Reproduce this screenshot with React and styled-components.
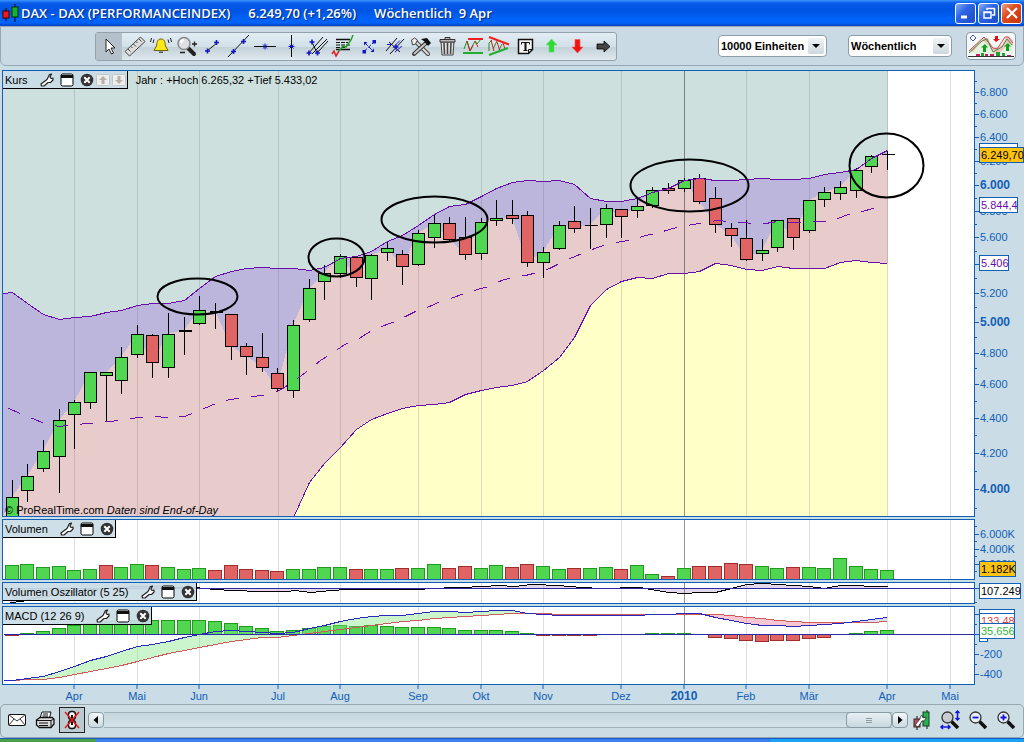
import React from "react";
import styled, { createGlobalStyle } from "styled-components";

const BLUE = "#1060b8";
const PURPLE = "#6a0dad";

// kind, high, body top, body bottom, low, volume top, macd histogram end
const weeks = [
  ["g", 479, 497, 520, 520, 565, 635],
  ["g", 463, 476, 490, 500, 564, 633],
  ["g", 439, 451, 468, 470, 567, 631],
  ["g", 408, 420, 456, 491, 566, 628],
  ["g", 399, 402, 414, 447, 570, 625],
  ["g", 371, 372, 402, 407, 569, 623],
  ["g", 372, 372, 375, 420, 565, 621, "r"],
  ["g", 346, 357, 380, 392, 567, 620],
  ["g", 324, 334, 354, 356, 564, 620],
  ["r", 333, 335, 362, 376, 565, 620],
  ["g", 312, 334, 367, 376, 567, 620],
  ["d", 316, 330, 331, 353, 569, 620, "g"],
  ["g", 295, 310, 323, 323, 568, 620],
  ["d", 302, 311, 312, 327, 570, 621, "r"],
  ["r", 314, 314, 346, 358, 565, 623],
  ["r", 342, 346, 356, 373, 569, 626],
  ["r", 332, 357, 367, 370, 570, 628],
  ["r", 367, 373, 388, 390, 571, 631],
  ["g", 319, 325, 390, 396, 569, 630],
  ["g", 278, 288, 319, 320, 569, 628],
  ["g", 264, 273, 281, 298, 567, 626],
  ["g", 253, 256, 273, 276, 567, 625],
  ["r", 256, 257, 277, 285, 569, 626],
  ["g", 253, 255, 278, 298, 569, 625],
  ["g", 241, 248, 252, 259, 569, 626],
  ["r", 249, 254, 266, 283, 568, 627],
  ["g", 229, 233, 264, 264, 568, 627],
  ["g", 213, 223, 237, 246, 564, 627],
  ["r", 216, 223, 239, 240, 568, 628],
  ["r", 216, 237, 254, 258, 566, 630],
  ["g", 217, 222, 253, 258, 568, 630],
  ["g", 199, 218, 220, 224, 565, 630],
  ["r", 199, 215, 218, 222, 567, 631],
  ["r", 210, 215, 262, 265, 564, 633],
  ["g", 246, 252, 262, 276, 566, 635],
  ["g", 220, 225, 248, 248, 569, 635],
  ["r", 205, 221, 228, 231, 568, 635],
  ["t", 207, 225, 225, 247, 568, 635, "g"],
  ["g", 203, 208, 224, 236, 567, 634],
  ["r", 208, 209, 216, 236, 569, 634],
  ["g", 198, 206, 210, 216, 565, 634],
  ["g", 186, 190, 205, 206, 574, 633],
  ["r", 182, 188, 190, 192, 576, 633],
  ["g", 177, 180, 188, 190, 568, 633],
  ["r", 173, 178, 201, 202, 566, 634],
  ["r", 186, 198, 224, 231, 566, 637],
  ["r", 222, 228, 235, 245, 563, 638],
  ["r", 219, 238, 259, 259, 564, 640],
  ["g", 238, 250, 253, 259, 566, 641, "g", "r"],
  ["g", 219, 220, 247, 250, 568, 640],
  ["r", 218, 218, 237, 248, 567, 640],
  ["g", 200, 200, 230, 231, 567, 638],
  ["g", 186, 192, 199, 205, 568, 637],
  ["g", 180, 187, 193, 198, 558, 634],
  ["g", 167, 170, 190, 196, 566, 633],
  ["g", 154, 156, 166, 171, 569, 631],
  ["t", 150, 154, 154, 168, 570, 630, "g"],
].map(([kind, high, top, bottom, low, volume, hist, tone], i) => ({
  x: Math.round(11.8 + i * 15.625),
  kind, high, top, bottom, low, volume, hist,
  tone: tone || kind,
  close: kind === "r" ? bottom : top,
}));

const upper = [
  292, 303, 314, 319, 317, 316, 312, 310, 305, 303, 303, 300, 288, 276, 271, 268, 267, 268, 268,
  270, 267, 258, 256, 251, 241, 235, 225, 214, 206, 204, 196, 188, 182, 180, 181, 180, 184, 198,
  201, 201, 198, 192, 188, 180, 178, 180, 180, 179, 178, 179, 179, 178, 174, 172, 169, 158, 150,
].map((y, i) => [weeks[i].x, y]);

const lower = [
  482, 463, 447, 429, 419, 413, 408, 405, 404, 402, 394, 390, 387, 385, 381, 370, 357, 337, 305,
  289, 281, 277, 278, 273, 273, 271, 263, 265, 269, 270, 266, 268, 268, 268, 262, 260, 262, 263,
].map((y, i) => [weeks[i + 19].x, y]);

const middle = "8,408 20,413 32,418 44,423 59,426 74,424 90,423 106,421 121,420 137,417 152,416 168,417 184,416 199,410 213,404 225,400 237,398 248,397 260,395 273,393 284,387 297,378 309,369 320,360 333,352 344,344 357,339 368,332 381,326 392,322 405,316 417,310 429,306 440,301 453,297 464,293 477,289 488,286 501,280 512,277 525,275 537,272 549,268 561,262 572,257 584,252 597,247 608,243 622,241 632,239 645,235 656,233 669,229 680,226 693,224 704,222 717,220 728,221 741,222 753,223 765,223 777,221 789,222 801,222 813,221 824,221 837,218 848,214 862,211 872,208 885,206";

const oscillator = "10,602 22,601 32,598 60,594 90,589 137,586 195,587 203,588 230,590 262,591 287,591 294,590 311,592 330,590 348,589 420,589 430,588 458,587 485,586 497,585 515,586 530,584 560,585 567,586 600,588 640,587 650,589 668,592 684,593 700,592 715,592 731,588 746,584 762,583 778,584 809,586 824,588 840,585 856,585 871,586 887,586";

const macd = [
  680, 678, 676, 671, 666, 660, 656, 651, 646, 644, 641, 637, 634, 631, 630, 631, 632, 633, 632,
  628, 625, 621, 618, 616, 615, 615, 613, 611, 611, 612, 611, 610, 610, 613, 614, 615, 615, 615,
  615, 615, 615, 614, 614, 613, 613, 617, 620, 623, 625, 625, 626, 625, 624, 623, 621, 619, 617,
].map((y, i) => [weeks[i].x, y]);

const signal = [
  680, 679, 679, 677, 674, 671, 668, 665, 661, 657, 653, 650, 647, 644, 641, 639, 637, 637, 635,
  633, 631, 629, 627, 625, 623, 621, 620, 618, 617, 616, 615, 614, 613, 613, 613, 614, 614, 614,
  614, 614, 614, 614, 614, 614, 614, 614, 615, 617, 618, 620, 621, 622, 622, 622, 622, 622, 621,
].map((y, i) => [weeks[i].x, y]);

const months = [
  ["Apr", 74], ["Mai", 137], ["Jun", 199], ["Jul", 278], ["Aug", 340], ["Sep", 418], ["Okt", 481],
  ["Nov", 543], ["Dez", 621], ["2010", 684], ["Feb", 746], ["Mär", 809], ["Apr", 887], ["Mai", 950],
];

const circles = [
  [197, 296, 40, 18], [336, 257, 28, 19], [434, 219, 53, 23], [689, 185, 59, 26], [886, 165, 37, 32],
];

const fills = { g: "#50d650", r: "#e06464" };
const edges = { g: "#1f9a1f", r: "#a02c2c" };
const pts = (list) => list.map((p) => p.join(",")).join(" ");

function Grid({ top, height }) {
  return months.map(([name, x], i) => (
    <rect key={i} x={x} y={top} width="1" height={height} fill={name === "2010" ? "#000" : "#404050"} fillOpacity={name === "2010" ? 0.42 : 0.17} />
  ));
}

function Plot({ top, height, label, children }) {
  return (
    <PlotSvg role="img" aria-label={label} viewBox={`3 ${top} 971 ${height}`} preserveAspectRatio="none" $height={height}>
      {children}
    </PlotSvg>
  );
}

function PricePlot() {
  const close = weeks.map((w) => [w.x, w.close]);
  const up = [[3, 293], ...upper];
  const low = [[293, 517], ...lower];
  return (
    <Plot top={71} height={445} label="DAX Kursverlauf">
      <polygon fill="#cde0de" points={pts([[3, 71], [888, 71], [888, 516], [3, 516]])} />
      <polygon fill="#bdb6dc" points={pts([...up, [888, 150], [888, 516], [3, 516]])} />
      <polygon fill="#e8cccc" points={pts([[3, 516], ...close, [888, 154], [888, 516]])} />
      <polygon fill="#ffffc8" points={pts([...low, [888, 263], [888, 516]])} />
      <Grid top={71} height={445} />
      <g transform="translate(.5 .5)">
        {weeks.map((w) => (
          <g key={w.x} stroke="#000">
            <line x1={w.x} x2={w.x} y1={w.high} y2={w.low + 1} />
            {fills[w.kind] ? (
              <rect x={w.x - 6} y={w.top} width="12" height={w.bottom - w.top} fill={fills[w.kind]} />
            ) : (
              <path d={`M${w.x - 6} ${w.top}h13${w.kind === "d" ? "m0 1h-13" : ""}`} />
            )}
          </g>
        ))}
        <g fill="none" stroke={PURPLE}>
          <polyline points={pts(up)} />
          <polyline points={pts(low)} />
          <polyline points={middle} strokeDasharray="13 12" />
        </g>
        <g fill="none" stroke="#000" strokeWidth="2" shapeRendering="auto">
          {circles.map(([cx, cy, rx, ry]) => (
            <ellipse key={cx} cx={cx} cy={cy} rx={rx} ry={ry} />
          ))}
        </g>
      </g>
    </Plot>
  );
}

function VolumePlot() {
  return (
    <Plot top={520} height={59} label="Volumen">
      <Grid top={520} height={59} />
      {weeks.map((w) => (
        <rect key={w.x} x={w.x - 6.5} y={w.volume + 0.5} width="13" height={580 - w.volume} fill={fills[w.tone]} stroke={edges[w.tone]} />
      ))}
    </Plot>
  );
}

function OscillatorPlot() {
  return (
    <Plot top={583} height={20} label="Volumen Oszillator">
      <Grid top={583} height={20} />
      <polygon points={`12,588 ${oscillator} 887,588`} fill="#8c64a8" fillOpacity=".25" />
      <g transform="translate(.5 .5)" fill="none">
        <polyline points={oscillator} stroke="#000" />
        <line x1="3" x2="974" y1="588" y2="588" stroke="#2a2aa8" />
      </g>
    </Plot>
  );
}

function MacdPlot() {
  const area = (from, to) => pts([...macd.slice(from, to), ...signal.slice(from, to).reverse()]);
  return (
    <Plot top={607} height={77} label="MACD">
      <Grid top={607} height={77} />
      {weeks.map((w) => {
        if (w.hist === 634) return null;
        const tone = w.hist > 634 ? "r" : "g";
        return (
          <rect key={w.x} x={w.x - 6.5} y={Math.min(w.hist, 634) + 0.5} width="13" height={Math.abs(634 - w.hist)} fill={fills[tone]} stroke={edges[tone]} />
        );
      })}
      <polygon points={area(0, 34)} fill="#7ee67e" fillOpacity=".4" />
      <polygon points={area(44, 54)} fill="#f08098" fillOpacity=".45" />
      <polygon points={area(53, 57)} fill="#8090c0" fillOpacity=".3" />
      <g transform="translate(.5 .5)" fill="none">
        <polyline points={pts([[3, 680], ...signal])} stroke="#d05a5a" />
        <polyline points={pts([[3, 680], ...macd])} stroke="#2828c0" />
        <line x1="3" x2="974" y1="634" y2="634" stroke="#2a2aa8" />
      </g>
    </Plot>
  );
}

function Scale({ top, height, major = [], minor = [], labels = [], children }) {
  return (
    <ScaleSvg viewBox={`975 ${top} 49 ${height}`} $height={height}>
      {major.map((y) => <rect key={y} x="975" y={y} width="4" height="1" />)}
      {minor.map((y) => <rect key={y} x="975" y={y} width="2" height="1" />)}
      {labels.map(([text, y, bold]) => (
        <ScaleText key={text} x="980" y={y + 4} $bold={bold}>{text}</ScaleText>
      ))}
      {children}
    </ScaleSvg>
  );
}

function Tag({ y, width, text, fill = "#fff", color = "#000" }) {
  return (
    <g>
      <rect x="979.5" y={y + 0.5} width={width} height="15" fill={fill} stroke={BLUE} />
      <ScaleText x="981" y={y + 12} fill={color}>{text}</ScaleText>
    </g>
  );
}

const WrenchIcon = () => (
  <Icon viewBox="0 0 14 14">
    <path d="M8 4.500L9.500 1.500 11.500 1 10 4l1 1.500L13 5v2l-2.500 2.500H8L4 13H1.500l-.5-2 6-4.500z" fill="#fff" stroke="#222" strokeWidth="1.200" strokeLinejoin="round" />
  </Icon>
);

const WindowIcon = () => (
  <Icon viewBox="0 0 14 14">
    <rect x="1" y="1" width="12" height="12" rx="1.5" fill="#fff" stroke="#000" />
    <path d="M1 2h12v3H1z" fill="#111" />
  </Icon>
);

const CloseIcon = () => (
  <Icon viewBox="0 0 14 14">
    <circle cx="7" cy="7" r="6.3" fill="#333" />
    <path d="M4.3 4.3l5.4 5.4M9.700 4.300l-5.400 5.400" stroke="#fff" strokeWidth="2" />
  </Icon>
);

const MoveIcon = ({ down }) => (
  <Icon viewBox="0 0 14 14">
    <rect x=".5" y="1.500" width="13" height="11" rx="1" fill="#eee" stroke="#c4c4c0" />
    <path d={down ? "M7 11L3 7h2.500V3h3v4H11z" : "M7 3L3 7h2.500v4h3V7H11z"} fill="#b4b0ac" />
  </Icon>
);

function PanelHead({ title, movable }) {
  return (
    <Head>
      <HeadTitle>{title}</HeadTitle>
      <HeadButton aria-label={`${title} einstellen`}><WrenchIcon /></HeadButton>
      <HeadButton aria-label={`${title} maximieren`}><WindowIcon /></HeadButton>
      <HeadButton aria-label={`${title} entfernen`}><CloseIcon /></HeadButton>
      {movable && (
        <MoveButtons>
          <HeadButton aria-label="Nach oben"><MoveIcon /></HeadButton>
          <HeadButton aria-label="Nach unten"><MoveIcon down /></HeadButton>
        </MoveButtons>
      )}
    </Head>
  );
}

// small blue anchor cross used by the line tools
const Cross = ({ x, y }) => <path d={`M${x - 2.500} ${y}h5M${x} ${y - 2.500}v5`} stroke="#1414c8" strokeWidth="1.600" />;

const tools = [
  ["Auswahl", <path d="M9 5v13l3-3 2.500 5 2-1-2.500-5h4z" fill="#fff" stroke="#222" />],
  ["Lineal", <g><path d="M2 17.500L17.500 3l4.500 4.500L6.500 22z" fill="#ddd" stroke="#444" /><path d="M5 15l2.500 2.500M8 12.500l1.500 1.500M10.500 10l2.500 2.500M13 7.500l1.500 1.500M16 5l2.500 2.500" stroke="#444" /></g>],
  ["Alarm", <g><path d="M12 5c-4 0-4 4-4.500 7L5 16.500h14L16.500 12c-.5-3-.5-7-4.500-7z" fill="#ffe818" stroke="#706000" /><path d="M10 17.500h4v1.500h-4z" fill="#555" /><path d="M5 5.500L4 9M2.500 4L1.500 8M19 5.500l1 3.500M21.500 4l1 4" fill="none" stroke="#222" /></g>],
  ["Zoom", <g><path d="M13 14l6 6" stroke="#222" strokeWidth="4" strokeLinecap="round" /><circle cx="9" cy="9.500" r="6" fill="#dce0e4" stroke="#888" strokeWidth="1.500" /><path d="M6 9a3 3 0 0 1 3-3" stroke="#fff" strokeWidth="2" fill="none" /><path d="M17 10h5M19.500 7.500v5M5 18.500h5" stroke="#222" strokeWidth="1.300" /></g>],
  ["Strecke", <g><path d="M6 17l10-8" stroke="#111" /><Cross x={6.5} y={17} /><Cross x={15.500} y={8.500} /></g>],
  ["Gerade", <g><path d="M1 23L22 1" stroke="#111" /><Cross x={6.500} y={17.500} /><Cross x={16.500} y={7.500} /></g>],
  ["Horizontale", <g><path d="M1 12.500h22" stroke="#111" /><path d="M10 10.500l4 4M14 10.500l-4 4M12 9.500v6" stroke="#1414c8" /></g>],
  ["Vertikale", <g><path d="M12.500 1v22" stroke="#111" /><path d="M10.500 10.500l4 4M14.500 10.500l-4 4M9.500 12.500h6" stroke="#1414c8" /></g>],
  ["Pitchfork", <g><path d="M3 20L18 3M7 20L22 5M12 19L23 7M7 8l5 11" stroke="#111" /><Cross x={4} y={19} /><Cross x={7} y={8} /><Cross x={12.500} y={19} /></g>],
  ["Fibonacci", <g><path d="M5 5.500h14M5 15.500h14" stroke="#111" strokeWidth="1.500" /><path d="M5 8.500h12M5 11h14M5 13.500h10" stroke="#111" strokeDasharray="4 1" /><path d="M1 20l2-3 2 5 3-5" fill="none" stroke="#e02020" strokeWidth="1.500" /><path d="M8 17l4-5 3 1 5-7 2-5" fill="none" stroke="#20a020" strokeWidth="1.500" /></g>],
  ["Segment", <g fill="#1414c8"><path d="M7 17.500L17 8M8 9l8 8" stroke="#1414c8" strokeDasharray="4 1.500" /><path d="M5.500 16h3.500v3.500H5.500zM15.500 6H19v3.500h-3.500zM7 8h3.500L7 11.500zM17 18h-3.500l3.500-3.500z" /></g>],
  ["Parallelen", <g><path d="M3 17L14 4M7 20L21 5M6 8l11 10" stroke="#111" /><path d="M4 10.500h4M10 13.500l7-7M12 18l7-6" stroke="#1414c8" /><Cross x={13} y={13} /></g>],
  ["Werkzeuge", <g><path d="M6 7l13 13" stroke="#444" strokeWidth="4" strokeLinecap="round" /><path d="M6 7l13 13" stroke="#ddd" strokeWidth="2" strokeLinecap="round" /><path d="M18 8L5 20" stroke="#333" strokeWidth="4" strokeLinecap="round" /><path d="M16 10L5.500 19.500" stroke="#c8c8c8" strokeWidth="2" strokeLinecap="round" /><path d="M12 5l6-1 4 5-3 3-3-4z" fill="#111" /><path d="M2.500 6l3-2 3 2-2 4-3 1z" fill="#eee" stroke="#444" /></g>],
  ["Papierkorb", <g><path d="M6 8h13l-1 13H7z" fill="#ddd" stroke="#444" /><path d="M9 9l.5 11M12.500 9v11M16 9l-.5 11" stroke="#444" strokeWidth="1.500" /><path d="M5 5.500h15v2.500H5zM10 5V3.500h5V5" fill="#bbb" stroke="#333" /></g>],
  ["Unterstützung", <g fill="none"><path d="M3 15l3-8 3 10 5-10 2 3 4-5" stroke="#209020" /><path d="M6 7l3 10 3-6M14 7l3 6" stroke="#d02020" /><path d="M7 5h15" stroke="#f02020" strokeWidth="2" /><path d="M2 19h20" stroke="#20b030" strokeWidth="2" /></g>],
  ["Dreieck", <g fill="none"><path d="M2 17V9l3-3M6 15l4-8M12 16l3-6" stroke="#209020" /><path d="M4 6l3 11M10 8l3 9M16 9l2 6" stroke="#d02020" /><path d="M2 3l20 7.500" stroke="#f02020" strokeWidth="2" /><path d="M2 21l19-7" stroke="#20b030" strokeWidth="2" /></g>],
  ["Textfeld", <g><path d="M5.500 5.500h14v10l-4 4h-10z" fill="#f4f4f4" stroke="#111" strokeWidth="1.500" /><path d="M15.500 19.500v-4h4" fill="none" stroke="#111" /><path d="M8.500 10.500V8.500h8v2M10.500 16.500h4" fill="none" stroke="#111" /><path d="M12.500 8.500v8" stroke="#111" strokeWidth="2" /></g>],
  ["Pfeil hoch", <path d="M12.500 5L18 11h-3v7h-5v-7H7z" fill="#30d838" stroke="#60e060" strokeWidth=".6" />],
  ["Pfeil runter", <path d="M12.500 19L7 13h3V5.500h5V13h3z" fill="#ee1414" stroke="#ff5050" strokeWidth=".6" />],
  ["Pfeil rechts", <path d="M19 12.500L13 18v-3H6v-5h7V7z" fill="#444" stroke="#000" strokeWidth=".8" />],
];

function Lens({ sign, children }) {
  return (
    <Icon $size={22} viewBox="0 0 22 22">
      <path d="M12.500 12.500l6.500 6.500" stroke="#111" strokeWidth="3.500" />
      <circle cx="8.500" cy="8.500" r="5.500" fill={sign ? "#e8eef4" : "#c8ccd0"} stroke="#333" strokeWidth="1.300" />
      {sign && <path d={sign} stroke="#1414d8" strokeWidth="1.800" />}
      {children}
    </Icon>
  );
}

export default function App() {
  return (
    <Page>
      <GlobalStyle />
      <TitleBar>
        <Icon $size={18} viewBox="0 0 18 18">
          <path d="M5 4v13M14 0v18" stroke="#000" />
          <rect x="2" y="7" width="6" height="7" fill="#f01818" stroke="#400" />
          <rect x="11" y="3" width="6" height="10" fill="#18b028" stroke="#030" />
        </Icon>
        <Title>
          <span>DAX - DAX (PERFORMANCEINDEX)</span>
          <span>6.249,70 (+1,26%)</span>
          <span>Wöchentlich&nbsp; 9 Apr</span>
        </Title>
        <WindowButton aria-label="Minimieren">
          <Icon viewBox="0 0 14 14"><path d="M2 11h6" stroke="#fff" strokeWidth="3" /></Icon>
        </WindowButton>
        <WindowButton aria-label="Wiederherstellen">
          <Icon viewBox="0 0 14 14"><path d="M5 4V2.500h7.500V9H10M5 2.500h7.500M2 6h7v6H2zM2 6.500h7" fill="none" stroke="#fff" strokeWidth="1.500" /></Icon>
        </WindowButton>
        <WindowButton $close aria-label="Schließen">
          <Icon viewBox="0 0 14 14"><path d="M2 2l10 10M12 2L2 12" stroke="#fff" strokeWidth="2.200" /></Icon>
        </WindowButton>
      </TitleBar>

      <ToolBar>
        <ToolGroup>
          {tools.map(([name, drawing], i) => (
            <ToolButton key={name} aria-label={name} $active={i === 0}>
              <Icon $size={24} viewBox="0 0 24 24">{drawing}</Icon>
            </ToolButton>
          ))}
        </ToolGroup>
        <Selects>
          <SelectBox $width={109}>
            <select aria-label="Einheiten" defaultValue="10000 Einheiten">
              <option>10000 Einheiten</option>
            </select>
            <Arrow />
          </SelectBox>
          <SelectBox $width={104}>
            <select aria-label="Zeitraum" defaultValue="Wöchentlich">
              <option>Wöchentlich</option>
            </select>
            <Arrow />
          </SelectBox>
        </Selects>
        <ChartButton aria-label="Indikatoren">
          <svg width="46" height="24" viewBox="0 0 46 24">
            <path d="M1 18L14 6l6-2 6 14 8-3 7-10 4 4v11l-6-3-7 3H8z" fill="#e4f2e0" />
            <path d="M1 16L15 4h5l5 10 9-3 4-8 3-1 4 5v5l-5-3-6 8-7 3-8-10-5-4L5 18z" fill="#f4b8b8" fillOpacity=".8" />
            <path d="M1 17L16 3l9 11 4 1 8-12h3l5 6" fill="none" stroke="#c05050" />
            <path d="M1 19L14 7l5-2 6 13 9-5 5-8 5 6" fill="none" stroke="#409040" />
            <path d="M5 1l1.500 1.500L8 4 5 7 2 4z" fill="#fff" stroke="#4050b0" />
            <path d="M17 10l3 3.500h-2V18h-3v-4.500h-2zM40 9l3 3.500h-2V17h-3v-4.500h-2z" fill="#10a020" />
            <path d="M28 8l-3-3h2V2h3v3h2z" fill="#e01010" />
            <path d="M0 22.500h46" stroke="#333" />
            <path d="M8 22v-2h4v2M17 22v-2h3v2M22 22v-2h4v2M39 22v-1h4v1" fill="#c02060" />
            <path d="M13 22v-3h3v3M28 22v-4h4v4M34 22v-3h3v3" fill="#20a030" />
          </svg>
        </ChartButton>
      </ToolBar>

      <Charts>
        <Panel>
          <PlotBox>
            <PricePlot />
            <Overlay>
              <PanelHead title="Kurs" movable />
              <HighLow>Jahr : +Hoch 6.265,32 +Tief 5.433,02</HighLow>
            </Overlay>
            <Credit>© ProRealTime.com <em>Daten sind End-of-Day</em></Credit>
          </PlotBox>
          <Scale
            top={70}
            height={447}
            major={[92, 114, 137, 161, 185, 211, 237, 264, 293, 322, 353, 384, 418, 453, 489]}
            minor={[81, 103, 126, 149, 173, 198, 224, 251, 278, 307, 337, 368, 401, 435, 471, 508]}
            labels={[
              ["6.800", 92], ["6.600", 114], ["6.400", 137], ["6.200", 161], ["6.000", 185, true],
              ["5.800", 211], ["5.600", 237], ["5.200", 293], ["5.000", 322, true], ["4.800", 353],
              ["4.600", 384], ["4.400", 418], ["4.200", 453], ["4.000", 489, true],
            ]}
          >
            <Tag y={143} width={38} />
            <Tag y={147} width={44} text="6.249,70" fill="#ffc20e" />
            <Tag y={197} width={38} text="5.844,4" color="#6a0dad" />
            <Tag y={255} width={29} text="5.406" color="#6a0dad" />
          </Scale>
        </Panel>

        <Panel>
          <PlotBox>
            <VolumePlot />
            <Overlay><PanelHead title="Volumen" /></Overlay>
          </PlotBox>
          <Scale top={519} height={61} major={[534, 549, 564]} minor={[526, 541, 556, 571]} labels={[["6.000K", 534], ["4.000K", 549], ["2.000K", 564]]}>
            <Tag y={561} width={36} text="1.182K" fill="#ffc20e" />
          </Scale>
        </Panel>

        <Panel>
          <PlotBox>
            <OscillatorPlot />
            <Overlay><PanelHead title="Volumen Oszillator (5 25)" /></Overlay>
          </PlotBox>
          <Scale top={582} height={22} major={[588]} minor={[602]}>
            <Tag y={583} width={41} text="107.249" />
          </Scale>
        </Panel>

        <Panel>
          <PlotBox>
            <MacdPlot />
            <Overlay><PanelHead title="MACD (12 26 9)" /></Overlay>
          </PlotBox>
          <Scale top={606} height={79} major={[614, 634, 654, 674]} minor={[624, 644, 664]} labels={[["-200", 654], ["-400", 674]]}>
            <Tag y={609} width={35} />
            <Tag y={626} width={8} />
            <Tag y={613} width={35} text="133,48" color="#d84848" />
            <Tag y={623} width={35} text="35,656" color="#30b840" />
          </Scale>
        </Panel>

        <TimeAxis>
          {months.map(([name, x], i) => {
            const left = `${((x - 2) / 973) * 100}%`;
            return (
              <g key={i}>
                <line x1={left} x2={left} y1="0" y2="4" stroke={BLUE} />
                <TimeText x={left} y="15" $bold={name === "2010"}>{name}</TimeText>
              </g>
            );
          })}
        </TimeAxis>
      </Charts>

      <BottomBar>
        <BarButton aria-label="E-Mail">
          <Icon $size={22} viewBox="0 0 22 22">
            <rect x="2.500" y="5.500" width="17" height="11" rx="1" fill="#fff" stroke="#111" />
            <path d="M3 6l8 6 8-6M3 16l5-6M19 16l-5-6" fill="none" stroke="#333" />
          </Icon>
        </BarButton>
        <BarButton aria-label="Drucken">
          <Icon $size={22} viewBox="0 0 22 22">
            <path d="M6 9l2-6h9l-1.500 6M9 5h5M8.500 7H14" fill="#fff" stroke="#111" />
            <path d="M2.500 11L6 8.500h12l2 1.500v5l-3 3.500H5.500L2.500 16z" fill="#ddd" stroke="#111" strokeWidth="1.300" />
            <path d="M2.500 11.500H17v6M17 11.500l3-1.500M5 14h9M5 16.500h9" fill="none" stroke="#111" />
          </Icon>
        </BarButton>
        <BarButton $framed aria-label="Verknüpfung aus">
          <Icon $size={22} viewBox="0 0 22 22">
            <rect x="7.500" y="2.500" width="7" height="8" rx="3" fill="#fff" stroke="#111" strokeWidth="1.400" />
            <rect x="7.500" y="11.500" width="7" height="8" rx="3" fill="#fff" stroke="#111" strokeWidth="1.400" />
            <path d="M11 6v10" stroke="#111" strokeWidth="2" />
            <path d="M4 3l14 16M18 3L4 19" stroke="#e81818" strokeWidth="1.500" />
          </Icon>
        </BarButton>
        <ScrollBar>
          <ScrollButton aria-label="Zurück"><Icon $size={8} viewBox="0 0 8 8"><path d="M6 0v8L1.500 4z" fill="#000" /></Icon></ScrollButton>
          <Track><Thumb><i /><i /><i /></Thumb></Track>
          <ScrollButton aria-label="Vor"><Icon $size={8} viewBox="0 0 8 8"><path d="M2 0v8l4.500-4z" fill="#000" /></Icon></ScrollButton>
        </ScrollBar>
        <BarIcons>
          <BarButton aria-label="Darstellung">
            <Icon $size={22} viewBox="0 0 22 22">
              <path d="M6 7v14M16 1v19" stroke="#111" />
              <rect x="3" y="10" width="6" height="8" fill="#b05060" stroke="#402020" />
              <rect x="12" y="3" width="6" height="14" fill="#28b050" stroke="#104020" />
              <path d="M11 6l1 3 3-1c0 3-2 4-4 4l-4 6-3-2 5-6c0-2 1-3 2-4z" fill="#fff" stroke="#222" strokeWidth=".8" />
            </Icon>
          </BarButton>
          <BarButton aria-label="Zoom anpassen">
            <Lens><path d="M18.500 2v9M16.500 4l2-2 2 2M16.500 9l2 2 2-2M2 18h9M4 16l-2 2 2 2M9 16l2 2-2 2" fill="none" stroke="#1414d8" strokeWidth="1.500" /></Lens>
          </BarButton>
          <BarButton aria-label="Verkleinern"><Lens sign="M5.500 8.500h6" /></BarButton>
          <BarButton aria-label="Vergrößern"><Lens sign="M5.500 8.500h6M8.500 5.500v6" /></BarButton>
        </BarIcons>
      </BottomBar>
      <TaskStrip><i /><i /><i /></TaskStrip>
    </Page>
  );
}

const GlobalStyle = createGlobalStyle`
  * {
    box-sizing: border-box;
  }
  body {
    margin: 0;
    background: #cadce6;
    font: 11px/14px "Liberation Sans", Arial, sans-serif;
    color: #000;
  }
  button {
    border: 0;
    padding: 0;
    background: none;
    font: inherit;
  }
`;

const Page = styled.div`
  display: flex;
  flex-direction: column;
  min-height: 100vh;
`;

const Icon = styled.svg`
  display: block;
  flex: none;
  width: ${(p) => p.$size || 14}px;
  height: ${(p) => p.$size || 14}px;
`;

const TitleBar = styled.header`
  display: flex;
  align-items: center;
  gap: 2px;
  height: 26px;
  padding: 0 2px 0 1px;
  background: linear-gradient(#3c96ff 0, #0a5cea 3px, #0054e3 10px, #0064fa 20px, #0062f8 23px, #0040c0 26px);
`;

const Title = styled.h1`
  display: flex;
  flex: 1;
  gap: 18px;
  margin: 0;
  color: #fff;
  font: 600 13px/20px "Open Sans", sans-serif;
  text-shadow: 1px 1px 1px #04257a;
  white-space: nowrap;
`;

const WindowButton = styled.button`
  display: grid;
  place-items: center;
  width: 21px;
  height: 21px;
  border: 1px solid #fff;
  border-radius: 3px;
  background: ${(p) =>
    p.$close
      ? "linear-gradient(135deg, #f0a080, #e04c20 40%, #c83408)"
      : "linear-gradient(135deg, #86aef8, #2c64e4 40%, #1c4ccc)"};
`;

const ToolBar = styled.div`
  display: flex;
  align-items: center;
  height: 40px;
  margin-bottom: 4px;
  padding: 0 7px 0 94px;
  border: 1px solid #98a8b8;
  border-radius: 0 0 6px 6px;
  background: #cadae4;
`;

const ToolGroup = styled.div`
  display: flex;
  height: 29px;
  border: 1px solid #94a2ae;
  border-radius: 3px;
  background: linear-gradient(#e2edf3, #d2e0e8 50%, #c2d0d8 51%, #dfe9ee);
`;

const ToolButton = styled.button`
  display: grid;
  place-items: center;
  width: 26px;
  background: ${(p) => (p.$active ? "#b4c0ca" : "none")};
`;

const Selects = styled.div`
  display: flex;
  gap: 21px;
  margin: 0 14px 0 auto;
`;

const SelectBox = styled.div`
  position: relative;
  width: ${(p) => p.$width}px;
  select {
    width: 100%;
    height: 22px;
    padding: 0 2px;
    appearance: none;
    border: 1px solid #8c9ca8;
    border-radius: 4px;
    background: #fff;
    color: #000;
    font: bold 11px/18px "Liberation Sans", Arial, sans-serif;
  }
`;

const Arrow = styled.span`
  position: absolute;
  top: 3px;
  right: 3px;
  width: 16px;
  height: 16px;
  border-radius: 2px;
  background: linear-gradient(#f0f4f6, #ccd8de);
  pointer-events: none;
  &::after {
    content: "";
    position: absolute;
    top: 6px;
    left: 4px;
    border: 4px solid transparent;
    border-top-color: #000;
  }
`;

const ChartButton = styled.button`
  display: grid;
  place-items: center;
  width: 50px;
  height: 28px;
  border: 1px solid #8c9ca8;
  border-radius: 4px;
  background: #f4f8f8;
`;

const Charts = styled.main`
  display: flex;
  flex-direction: column;
  gap: 2px;
  padding-left: 2px;
`;

const Panel = styled.section`
  display: flex;
`;

const PlotBox = styled.div`
  position: relative;
  flex: 1;
  min-width: 0;
  border: 1px solid ${BLUE};
  background: #fff;
`;

const PlotSvg = styled.svg`
  display: block;
  width: 100%;
  height: ${(p) => p.$height}px;
  shape-rendering: crispEdges;
`;

const ScaleSvg = styled.svg`
  display: block;
  flex: none;
  width: 49px;
  height: ${(p) => p.$height}px;
  fill: ${BLUE};
`;

const ScaleText = styled.text`
  font-size: ${(p) => (p.$bold ? 12 : 11)}px;
  font-weight: ${(p) => (p.$bold ? "bold" : "normal")};
`;

const Overlay = styled.div`
  position: absolute;
  top: 0;
  left: 0;
  display: flex;
  align-items: center;
`;

const Head = styled.div`
  display: flex;
  align-items: center;
  gap: 6px;
  height: 18px;
  padding: 0 1px 0 2px;
  border: solid #000;
  border-width: 0 1px 1px 0;
  background: rgba(202, 220, 230, 0.92);
`;

const HeadTitle = styled.h2`
  margin: 0 6px 0 0;
  font: inherit;
  white-space: nowrap;
`;

const HeadButton = styled.button`
  display: block;
`;

const MoveButtons = styled.div`
  display: flex;
  gap: 2px;
  margin-left: -4px;
`;

const HighLow = styled.span`
  padding-left: 8px;
`;

const Credit = styled.small`
  position: absolute;
  left: 2px;
  bottom: -1px;
  font-size: 11px;
`;

const TimeAxis = styled.svg`
  display: block;
  width: calc(100% - 49px);
  height: 19px;
  margin-top: -2px;
  overflow: visible;
`;

const TimeText = styled.text`
  fill: ${BLUE};
  font-size: ${(p) => (p.$bold ? 12 : 11)}px;
  font-weight: ${(p) => (p.$bold ? "bold" : "normal")};
  text-anchor: middle;
`;

const BottomBar = styled.footer`
  display: flex;
  align-items: center;
  height: 34px;
  padding: 0 3px 2px 2px;
  border: 1px solid #98a8b0;
  border-radius: 5px;
  background: #cddde4;
`;

const BarButton = styled.button`
  display: grid;
  place-items: center;
  width: ${(p) => (p.$framed ? 26 : 28)}px;
  height: 26px;
  border: ${(p) => (p.$framed ? "1px solid #222" : "0")};
  background: ${(p) => (p.$framed ? "#bccad2" : "none")};
`;

const ScrollBar = styled.div`
  display: flex;
  flex: 1;
  margin-left: 3px;
`;

const ScrollButton = styled.button`
  display: grid;
  place-items: center;
  width: 16px;
  height: 16px;
  border: 1px solid #889aa4;
  border-radius: 4px;
  background: linear-gradient(#f4f8fa, #ccdae0);
`;

const Track = styled.div`
  display: flex;
  flex: 1;
  justify-content: flex-end;
  border: solid #a0b0b8;
  border-width: 1px 0;
  background: linear-gradient(#c6d6de, #d4e2e8);
`;

const Thumb = styled.div`
  display: flex;
  flex-direction: column;
  align-items: center;
  justify-content: center;
  gap: 1px;
  width: 46px;
  margin: -1px 0;
  border: 1px solid #889aa4;
  border-radius: 4px;
  background: linear-gradient(#e8f0f4, #c8d8e0);
  i {
    width: 6px;
    height: 1px;
    background: #8c9ca4;
  }
`;

const BarIcons = styled.div`
  display: flex;
`;

const TaskStrip = styled.div`
  display: flex;
  flex: 1;
  min-height: 4px;
  border-top: 1px solid #1c58c8;
  i {
    flex: 674;
    background: #3c80f0;
  }
  i:first-child {
    flex: 96;
    background: #48a048;
  }
  i:last-child {
    flex: 254;
    background: #18a4f4;
  }
`;
